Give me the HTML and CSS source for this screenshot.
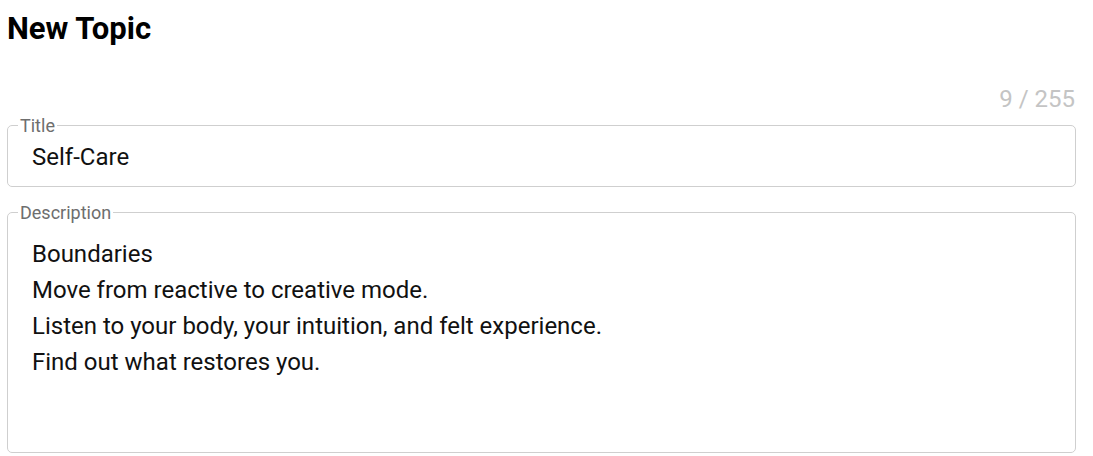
FILE: index.html
```html
<!DOCTYPE html>
<html>
<head>
<meta charset="utf-8">
<link rel="stylesheet" href="styles.css">
</head>
<body>
<main class="page">
  <h1 class="heading">New Topic</h1>
  <div class="counter">9 / 255</div>
  <fieldset class="field field-title">
    <legend class="field-label">Title</legend>
    <div class="field-value">Self-Care</div>
  </fieldset>
  <fieldset class="field field-desc">
    <legend class="field-label">Description</legend>
    <div class="field-value multiline">Boundaries
Move from reactive to creative mode.
Listen to your body, your intuition, and felt experience.
Find out what restores you.</div>
  </fieldset>
</main>
</body>
</html>
```
FILE: styles.css
```css
html, body {
  margin: 0;
  padding: 0;
  background: #ffffff;
}
body {
  font-family: Roboto, "Liberation Sans", sans-serif;
  color: #000;
}
.page {
  padding: 7px 17px 0 7px;
  display: flex;
  flex-direction: column;
}
.heading {
  margin: 0;
  font-size: 31px;
  font-weight: 700;
  line-height: 44px;
  height: 44px;
}
.counter {
  margin-top: 34px;
  text-align: right;
  font-size: 24px;
  line-height: 28px;
  color: #c4c4c4;
  padding-right: 1px;
}
.field {
  margin: 0;
  border: 1px solid #cfcfcf;
  border-radius: 5px;
  padding: 0 0 0 10px;
  min-width: 0;
}
.field-title {
  margin-top: 2px;
  height: 72px;
  box-sizing: border-box;
}
.field-desc {
  margin-top: 15px;
  height: 251px;
  box-sizing: border-box;
}
.field-label {
  padding: 0 2px;
  font-size: 18px;
  line-height: 21px;
  color: #6e6e6e;
}
.field-value {
  padding-left: 14px;
  font-size: 24px;
  line-height: 36px;
  color: #111;
}
.field-title .field-value {
  margin-top: 3px;
}
.multiline {
  white-space: pre-line;
  margin-top: 13px;
}
```
